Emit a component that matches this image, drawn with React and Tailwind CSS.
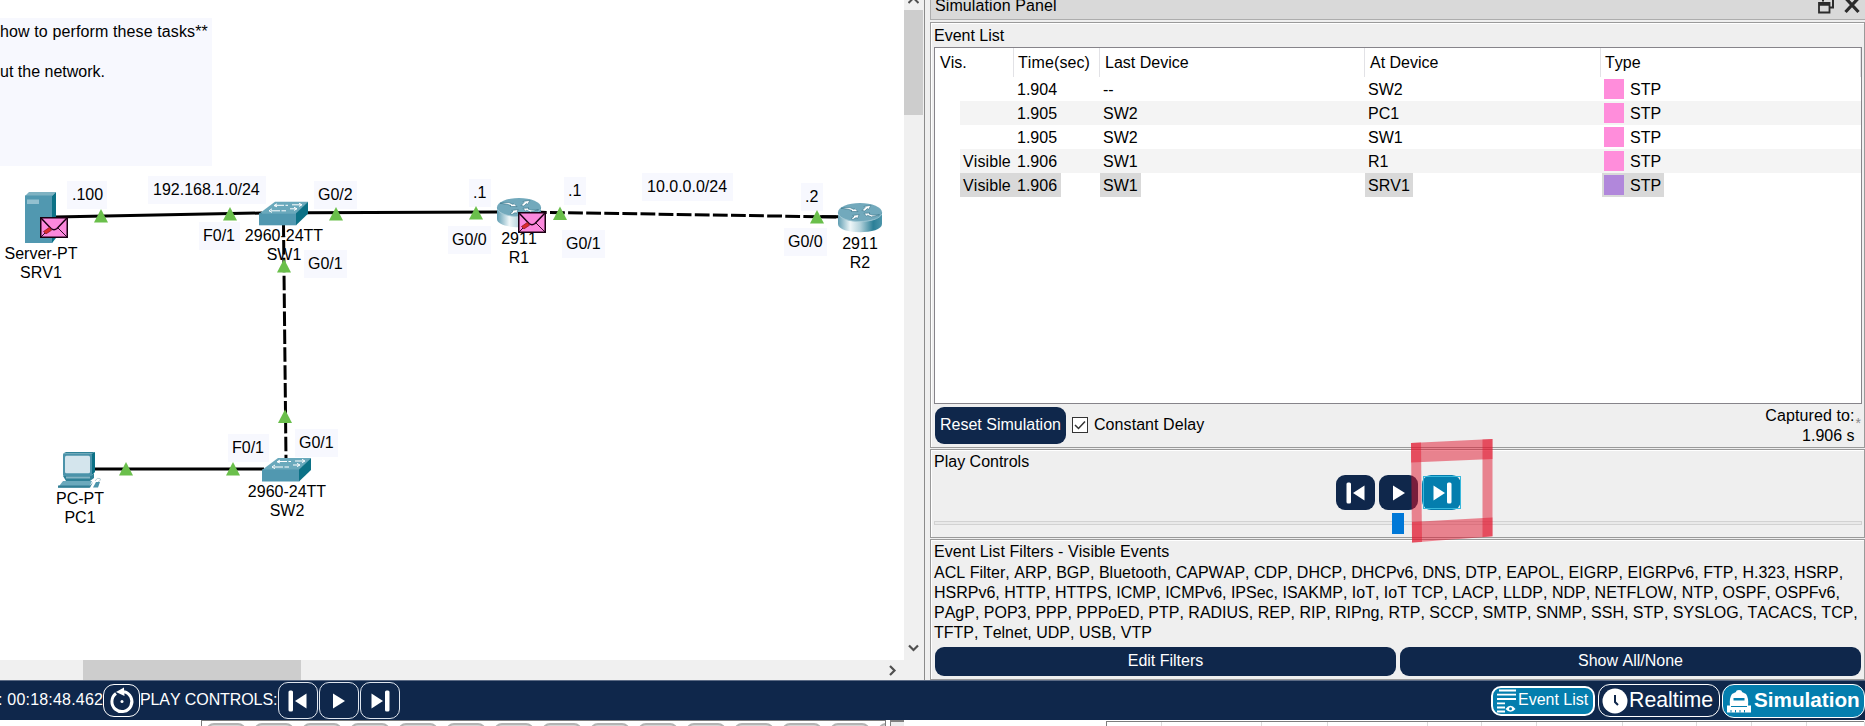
import React from "react";

const portLabels = [
  { t: ".100", x: 67, y: 181, w: 40, h: 28, tx: 5 },
  { t: "192.168.1.0/24", x: 148, y: 176, w: 118, h: 28, tx: 5 },
  { t: "G0/2", x: 314, y: 181, w: 43, h: 28, tx: 4 },
  { t: "F0/1", x: 199, y: 222, w: 41, h: 28, tx: 4 },
  { t: "G0/1", x: 304, y: 250, w: 43, h: 28, tx: 4 },
  { t: ".1", x: 469, y: 179, w: 22, h: 28, tx: 4 },
  { t: ".1", x: 564, y: 177, w: 22, h: 28, tx: 4 },
  { t: "10.0.0.0/24", x: 642, y: 173, w: 91, h: 28, tx: 5 },
  { t: ".2", x: 801, y: 183, w: 22, h: 28, tx: 4 },
  { t: "G0/0", x: 448, y: 226, w: 43, h: 28, tx: 4 },
  { t: "G0/1", x: 562, y: 230, w: 43, h: 28, tx: 4 },
  { t: "G0/0", x: 784, y: 228, w: 43, h: 28, tx: 4 },
  { t: "F0/1", x: 228, y: 434, w: 41, h: 28, tx: 4 },
  { t: "G0/1", x: 295, y: 429, w: 43, h: 28, tx: 4 },
];

const deviceNames = [
  { a: "Server-PT", b: "SRV1", x: 41, y: 244 },
  { a: "2960-24TT", b: "SW1", x: 284, y: 226 },
  { a: "2911", b: "R1", x: 519, y: 229 },
  { a: "2911", b: "R2", x: 860, y: 234 },
  { a: "PC-PT", b: "PC1", x: 80, y: 489 },
  { a: "2960-24TT", b: "SW2", x: 287, y: 482 },
];

const linkLights = [
  [101, 209], [230, 207], [336, 207], [284, 259], [476, 206], [560, 206.5],
  [817, 210], [126, 462], [233, 462], [285, 409.5],
];

function Switch({ x, y }) {
  return (
    <g transform={`translate(${x} ${y})`}>
      <polygon points="0,12 16,0 49,0 37,12" fill="#6aa9bc" />
      <rect x="0" y="11.5" width="37.3" height="12" fill="#5198b0" />
      <polygon points="37,11.5 49,0 49,12 37,23.5" fill="#0c7186" />
      <g stroke="#fff" strokeWidth="1" fill="none">
        <path d="M16 3.5H29M33 3H42M12 9H27M31 7H37" strokeDasharray="9 1.5" />
        <path d="M18 2l-3 1.8 3 1.2M40 1.4l3 1.6-3 1.6M13 7l-3 2 3 1.6M35 5.4l3 1.6-3 1.6" />
      </g>
    </g>
  );
}

function Router({ x, y }) {
  return (
    <g transform={`translate(${x} ${y})`}>
      <path d="M0 9V21C0 32 44 32 44 21V9Z" fill="url(#routerSide)" />
      <ellipse cx="22" cy="9.3" rx="22" ry="9.3" fill="#72a9bc" />
      <path d="M0.3 11C4 21 40 21 43.7 11" fill="none" stroke="#a9cdd8" strokeWidth="0.8" />
      <g fill="#fff" stroke="#2f6f84" strokeWidth="0.6">
        <path d="M3 5.2l9-.6 4 1.8 1-.8 3 3-7-.2 1-.9-3-1z" />
        <path d="M24 7.5l3-3-1-1 7-1.3-2.4 4.2-1.2-.8-2.6 2.4z" />
        <path d="M26 10.3l6-.3-1 .9 3.5 1.2 7-.4-8 2.2-4-1.6-1 .9z" />
        <path d="M13 15.5l3-2-1.3-1 6.4-1-1.6 4-1.4-.9-3 1.8z" />
      </g>
    </g>
  );
}

function Envelope({ x, y }) {
  return (
    <g transform={`translate(${x} ${y})`}>
      <rect x="0.75" y="0.75" width="26.5" height="19.5" fill="#fb88dc" stroke="#1a0012" strokeWidth="1.5" />
      <path d="M1 1L11 11.5Q14 14 17 11.5L27 1" fill="none" stroke="#1a0012" strokeWidth="1.5" />
      <path d="M1 20L10 11M18 11L27 20" fill="none" stroke="#1a0012" strokeWidth="0.9" />
      <path d="M3.5 14.5l6-4.2 2 3-5.5 3.6z" fill="#dc2b2b" stroke="#7d1420" strokeWidth="0.7" />
    </g>
  );
}

function Topology() {
  return (
    <svg className="absolute left-0 top-0" width="904" height="660" viewBox="0 0 904 660">
      <defs>
        <linearGradient id="routerSide">
          <stop offset="0" stopColor="#5f9db2" />
          <stop offset="0.28" stopColor="#eef6f8" />
          <stop offset="0.5" stopColor="#b5d3dc" />
          <stop offset="0.8" stopColor="#2b7f97" />
          <stop offset="1" stopColor="#4c95aa" />
        </linearGradient>
      </defs>
      <g stroke="#000" strokeWidth="3" fill="none">
        <path d="M55 217L262 213M306 212.8L498 212M94 469H264" />
        <path d="M541 212.3L838 217" strokeDasharray="14.8 3.3" strokeDashoffset="-9" />
        <path d="M820 216.7H838" />
        <path d="M283.5 225L286 459" strokeDasharray="14.5 3.4" strokeDashoffset="3" />
      </g>
      <g fill="#6abf4b">
        {linkLights.map(([x, y], i) => (
          <polygon key={i} points={`${x - 7},${y + 13.5} ${x},${y} ${x + 7},${y + 13.5}`} />
        ))}
      </g>
      <g>
        <polygon points="25,196 29,192 56,192 52,196" fill="#7fb2c2" />
        <rect x="25" y="195.5" width="27.3" height="47.5" fill="#5198b0" />
        <polygon points="52,196 56,192 56,238 52,243" fill="#0c7186" />
        <rect x="27" y="199.5" width="12" height="4.5" fill="#93c0cf" />
      </g>
      <Envelope x={40} y={217} />
      <Switch x={259} y={201.8} />
      <Switch x={262} y={458} />
      <Router x={497} y={198} />
      <Envelope x={518} y={212} />
      <Router x={838} y={203} />
      <g>
        <polygon points="63,453.5 66,452 95,452 92,453.5" fill="#2f8197" />
        <polygon points="91,454 95,452 95,472 91,476" fill="#0c7186" />
        <rect x="63" y="453.5" width="29" height="22.5" rx="1" fill="#4b93aa" />
        <rect x="65" y="455.8" width="25" height="17.4" rx="1.5" fill="#d4e5ed" />
        <polygon points="63,476 91,476 94,473 94,478 90,481 66,481" fill="#2f8197" />
        <rect x="66" y="476.5" width="24" height="2" fill="#83b4c4" />
        <polygon points="63,481 92,481 89,487.5 58,487.5" fill="#6aa9bc" />
        <polygon points="58,485.5 90,485.5 93,482 90,487.8 58,487.8" fill="#327f95" />
        <path d="M95 481Q97 477 100 478.500Q102 480 98 482" fill="none" stroke="#b9cdd4" strokeWidth="1" />
        <polygon points="96,482 100,482 98,487.5 93,487.5" fill="#4b93aa" />
      </g>
    </svg>
  );
}

function Workspace() {
  return (
    <div className="flex h-[680px] w-[924px] flex-col bg-[#f0f0f0]">
      <div className="flex h-[660px]">
        <div className="relative h-[660px] w-[904px] overflow-hidden bg-white">
          <div className="absolute left-0 top-[18px] h-[148px] w-[212px] bg-[#f7f8fe] pt-[4px]">
            <p className="tracking-[0.12px]">how to perform these tasks**</p>
            <p className="mt-5">ut the network.</p>
          </div>
          {portLabels.map((l, i) => (
            <div
              key={i}
              className="absolute bg-[#f7f8fe] pt-1"
              style={{ left: l.x, top: l.y, width: l.w, height: l.h, paddingLeft: l.tx }}
            >
              {l.t}
            </div>
          ))}
          {deviceNames.map((d, i) => (
            <div
              key={i}
              className="absolute w-[100px] text-center leading-[19px]"
              style={{ left: d.x - 50, top: d.y }}
            >
              <div>{d.a}</div>
              <div>{d.b}</div>
            </div>
          ))}
          <Topology />
        </div>
        <div className="flex h-[660px] w-5 flex-col items-center justify-between">
          <div className="w-full">
            <svg className="ml-[4px] block" width="11" height="10" viewBox="0 0 11 10">
              <path d="M0.500 3L5.500 -2L10.500 3" fill="none" stroke="#505050" strokeWidth="2" />
            </svg>
            <div className="h-[105px] w-[19px] bg-[#cdcdcd]" />
          </div>
          <svg className="mb-[8px] mr-[2px]" width="11" height="8" viewBox="0 0 11 8">
            <path d="M1 1.500L5.500 6L10 1.500" fill="none" stroke="#505050" strokeWidth="2.200" />
          </svg>
        </div>
      </div>
      <div className="flex h-5 items-center">
        <div className="ml-[83px] h-5 w-[218px] bg-[#cdcdcd]" />
        <svg className="ml-[588px]" width="8" height="11" viewBox="0 0 8 11">
          <path d="M1 1L5.500 5.500L1 10" fill="none" stroke="#505050" strokeWidth="2.200" />
        </svg>
      </div>
    </div>
  );
}

const events = [
  { vis: "", time: "1.904", last: "--", at: "SW2" },
  { vis: "", time: "1.905", last: "SW2", at: "PC1" },
  { vis: "", time: "1.905", last: "SW2", at: "SW1" },
  { vis: "Visible", time: "1.906", last: "SW1", at: "R1" },
  { vis: "Visible", time: "1.906", last: "SW1", at: "SRV1", selected: true },
];

function EventRow({ e, striped }) {
  const mark = e.selected ? "bg-[#d9d9d9]" : "";
  return (
    <div className={`ml-[25px] flex h-6 leading-[26px] ${striped ? "bg-[#f4f4f4]" : ""}`}>
      <div className={`h-6 w-[54px] pl-[3px] tracking-[0.1px] ${mark}`}>{e.vis}</div>
      <div className="w-[86px]">
        <span className={`inline-block h-6 pl-[3px] pr-1 ${mark}`}>{e.time}</span>
      </div>
      <div className="w-[265px]">
        <span className={`inline-block h-6 px-[3px] ${mark}`}>{e.last}</span>
      </div>
      <div className="w-[237px]">
        <span className={`inline-block h-6 px-[3px] ${mark}`}>{e.at}</span>
      </div>
      <div>
        <span className={`flex h-6 items-center gap-[6px] pl-[2px] pr-[3px] ${mark}`}>
          <span className={`h-5 w-5 ${e.selected ? "bg-[#b187db]" : "bg-[#ff8ddb]"}`} />
          <span className="h-6">STP</span>
        </span>
      </div>
    </div>
  );
}

function EventTable() {
  return (
    <div className="h-[357px] w-[928px] border border-[#86848a] bg-white">
      <div className="flex h-[29px] leading-[29px]">
        <div className="w-[79px] border-r border-[#e2e2e6] pl-[5px]">Vis.</div>
        <div className="w-[86px] border-r border-[#e2e2e6] pl-[4px] tracking-[0.1px]">Time(sec)</div>
        <div className="w-[265px] border-r border-[#e2e2e6] pl-[5px]">Last Device</div>
        <div className="w-[236px] border-r border-[#e2e2e6] pl-[5px]">At Device</div>
        <div className="grow border-r border-[#e2e2e6] pl-[4px]">Type</div>
      </div>
      {events.map((e, i) => (
        <EventRow key={i} e={e} striped={i === 1 || i === 3} />
      ))}
    </div>
  );
}

function StepBack() {
  return (
    <svg width="20" height="24" viewBox="0 0 20 24" fill="#fff">
      <rect x="0.500" y="1.500" width="4.500" height="21" rx="1.500" />
      <polygon points="7,12 18.500,4.500 18.500,19.500" />
    </svg>
  );
}
function StepForward() {
  return (
    <svg width="20" height="24" viewBox="0 0 20 24" fill="#fff">
      <rect x="15" y="1.500" width="4.500" height="21" rx="1.500" />
      <polygon points="13,12 1.500,4.500 1.500,19.500" />
    </svg>
  );
}
function PlayIcon() {
  return (
    <svg width="14" height="24" viewBox="0 0 14 24" fill="#fff">
      <polygon points="13,12 1,4.500 1,19.500" />
    </svg>
  );
}

function Highlight() {
  return (
    <svg className="pointer-events-none absolute left-[479px] top-[-11px]" width="86" height="106" viewBox="0 0 86 106">
      <g fill="#e1152d" fillOpacity="0.5">
        <polygon points="1,4 82.500,0 82.500,20 1,23.500" />
        <polygon points="1,4 11,3.500 12,103 2,103.500" />
        <polygon points="72.500,0.500 82.500,0 82.500,97 72.500,98" />
        <polygon points="2,83 82.500,78.500 82.500,97.500 2,103.500" />
      </g>
    </svg>
  );
}

function Panel({ className, children }) {
  return (
    <section className={`border border-[#9a9a9a] pl-[3px] shadow-[inset_1px_1px_0_#fff] ${className}`}>
      {children}
    </section>
  );
}

function SimulationPanel() {
  return (
    <div className="flex h-[680px] w-[941px] flex-col border-l border-[#8b8b8b] bg-[#efefef] pl-[5px]">
      <div className="flex h-5 items-start justify-between border-b border-l border-[#adadad] bg-[#d9d9d9] pl-1 pr-[5px]">
        <span className="mt-[-4px] tracking-[0.1px]">Simulation Panel</span>
        <span className="flex gap-[9px]">
          <svg width="17" height="14" viewBox="0 0 17 14" fill="none" stroke="#2b2b2b">
            <path d="M5 0V1.500M15 0V7.500H12" strokeWidth="2" />
            <path d="M1 12.500V3H11.500V12.500Z" strokeWidth="1.800" />
            <path d="M1 4H12" strokeWidth="3.500" />
          </svg>
          <svg width="16" height="14" viewBox="0 0 16 14">
            <path d="M1.500 -2L14.500 12M14.500 -2L1.500 12" stroke="#2b2b2b" strokeWidth="3.200" />
          </svg>
        </span>
      </div>
      <Panel className="mt-[2px] h-[426px]">
        <div className="h-6 pt-[3px]">Event List</div>
        <EventTable />
        <div className="flex h-[43px] items-start pt-[3px]">
          <button className="ml-[1px] h-[37px] w-[131px] rounded-[9px] bg-[#0f274b] pb-[1px] text-white">Reset Simulation</button>
          <span className="ml-[6px] mt-[10px] flex h-4 w-4 items-center justify-center border border-[#333] bg-white">
            <svg width="12" height="10" viewBox="0 0 12 10">
              <path d="M1 5L4.500 8.500L11 1.500" fill="none" stroke="#333" strokeWidth="1.500" />
            </svg>
          </span>
          <span className="ml-[6px] mt-[8px] tracking-[0.07px]">Constant Delay</span>
          <div className="ml-auto text-right">
            <div className="mt-[-1px] tracking-[0.1px]">Captured to:</div>
            <div>1.906 s</div>
          </div>
          <span className="ml-[1px] mr-[3px] mt-[8px] text-[14px] leading-[16px] text-[#8a8a8a]">*</span>
        </div>
      </Panel>
      <Panel className="relative mt-[1px] h-[89px]">
        <div className="h-[25px] pt-[2px]">Play Controls</div>
        <div className="ml-[402px] flex h-[36px] gap-[4px]">
          <button className="flex h-[35px] w-[39px] items-center justify-center rounded-[9px] bg-[#0f274b]"><StepBack /></button>
          <button className="flex h-[35px] w-[39px] items-center justify-center rounded-[9px] bg-[#0f274b]"><PlayIcon /></button>
          <button className="flex h-[35px] w-[39px] items-center justify-center rounded-[9px] bg-[#047eae]">
            <span className="flex h-[33px] w-[38px] items-center justify-center border border-[#38b8dc]"><StepForward /></span>
          </button>
        </div>
        <div className="flex h-[24px] items-center">
          <div className="h-1 w-[458px] border border-r-0 border-[#d2d2d2] bg-[#e9e9e9]" />
          <div className="h-[21px] w-3 bg-[#0078d7]" />
          <div className="h-1 w-[458px] border border-l-0 border-[#d2d2d2] bg-[#e9e9e9]" />
        </div>
        <Highlight />
      </Panel>
      <Panel className="mt-[1px] h-[141px]">
        <div className="h-[23px] pt-[2px] tracking-[0.07px]">Event List Filters - Visible Events</div>
        <div className="whitespace-nowrap leading-5">
          <p className="tracking-[0.02px]">ACL Filter, ARP, BGP, Bluetooth, CAPWAP, CDP, DHCP, DHCPv6, DNS, DTP, EAPOL, EIGRP, EIGRPv6, FTP, H.323, HSRP,</p>
          <p>HSRPv6, HTTP, HTTPS, ICMP, ICMPv6, IPSec, ISAKMP, IoT, IoT TCP, LACP, LLDP, NDP, NETFLOW, NTP, OSPF, OSPFv6,</p>
          <p>PAgP, POP3, PPP, PPPoED, PTP, RADIUS, REP, RIP, RIPng, RTP, SCCP, SMTP, SNMP, SSH, STP, SYSLOG, TACACS, TCP,</p>
          <p>TFTP, Telnet, UDP, USB, VTP</p>
        </div>
        <div className="mt-[4px] flex gap-[4px] pl-[1px]">
          <button className="h-[29px] w-[461px] rounded-[9px] bg-[#0f274b] pb-[1px] text-white">Edit Filters</button>
          <button className="h-[29px] w-[461px] rounded-[9px] bg-[#0f274b] pb-[1px] text-white">Show All/None</button>
        </div>
      </Panel>
    </div>
  );
}

function Toolbar() {
  return (
    <div className="flex h-10 items-center border-t border-[#5c6b85] bg-[#0f274b] text-white">
      <span className="ml-[-2px] w-[105px] whitespace-pre pb-[2px] tracking-[0.2px]">: 00:18:48.462</span>
      <button className="flex h-[33px] w-[37px] items-center justify-center rounded-[11px] border border-white">
        <svg width="26" height="28" viewBox="0 0 26 28">
          <path d="M7 6.500A10 10 0 1 0 15 4.800" fill="none" stroke="#fff" strokeWidth="3" />
          <polygon points="7,5 15,0.500 15.500,9" fill="#fff" />
          <circle cx="13" cy="14.500" r="1.500" fill="#fff" />
        </svg>
      </button>
      <span className="w-[138px] whitespace-nowrap pb-[2px] tracking-[-0.1px]">PLAY CONTROLS:</span>
      <div className="flex gap-[1px]">
        <button className="flex h-[37px] w-[40px] items-center justify-center rounded-[10px] border border-[#dfe5ee]"><StepBack /></button>
        <button className="flex h-[37px] w-[40px] items-center justify-center rounded-[10px] border border-[#dfe5ee]"><PlayIcon /></button>
        <button className="flex h-[37px] w-[40px] items-center justify-center rounded-[10px] border border-[#dfe5ee]"><StepForward /></button>
      </div>
      <div className="ml-auto flex items-center whitespace-nowrap">
        <button className="flex h-[30px] w-[104px] items-center rounded-[10px] border-2 border-white bg-[#047eae] pl-[3px]">
          <svg width="20" height="24" viewBox="0 0 20 24">
            <path d="M3 1.500H20M1 5.700H20M1 10H20M1 14.300H9M1 18.500H9M1 22.500H9" stroke="#fff" strokeWidth="1.800" />
            <path d="M9.500 20Q14.500 13.500 19.500 20Q14.500 25.500 9.500 20Z" fill="#fff" />
            <circle cx="14.500" cy="19.800" r="1.500" fill="#047eae" />
          </svg>
          <span className="ml-[2px] pb-[1px]">Event List</span>
        </button>
        <button className="ml-[3px] flex h-[33px] w-[122px] items-center rounded-[12px] border border-white pl-[3px]">
          <svg width="26" height="26" viewBox="0 0 26 26">
            <circle cx="13" cy="13" r="12.500" fill="#fff" />
            <path d="M13 7V14L16 17" fill="none" stroke="#0f274b" strokeWidth="2" />
          </svg>
          <span className="ml-[1px] pb-[2px] text-[21.300px] leading-6">Realtime</span>
        </button>
        <button className="ml-[2px] flex h-[34px] w-[143px] items-center rounded-[12px] border border-white bg-[#047eae] pl-[3px]">
          <svg width="26" height="24" viewBox="0 0 26 24">
            <path d="M10 3Q10 1 13 1Q16 1 16 3L20 5Q23 9 22 17H4Q3 9 6 5Z" fill="#fff" />
            <path d="M7.500 9H18.500V11.500H7.500Z" fill="#047eae" />
            <path d="M1 16.500H5V18H21V16.500H25V23.500H1Z" fill="#fff" />
            <path d="M5 23.500V21M9.500 23.500V21M14 23.500V21M18.500 23.500V21" stroke="#047eae" strokeWidth="1" />
          </svg>
          <span className="ml-[2px] pb-[2px] text-[20.700px] font-bold leading-6">Simulation</span>
        </button>
      </div>
    </div>
  );
}

const columnWidths = [55, 100, 66, 100, 54, 55, 86, 74, 55, 55, 58];

function BottomStrip() {
  return (
    <div className="flex h-[6px] bg-white">
      <div className="ml-[201px] flex w-[685px] gap-2 overflow-hidden border-x border-t border-[#7d7d7d] pl-1 pt-[2px]">
        {Array.from({ length: 15 }, (_, i) => (
          <div key={i} className="h-5 w-10 shrink-0 rounded-t-[8px] border-2 border-[#b4b4b4] bg-[#d6d6d6]" />
        ))}
      </div>
      <div className="ml-1 w-[14px] border-l border-t-2 border-[#808080] bg-[#ededed]" />
      <div className="ml-[202px] mt-[1px] flex w-[758px] border-l border-t border-[#7d7d7d]">
        {columnWidths.map((w, i) => (
          <div key={i} className="shrink-0 border-r border-[#dcdcdc]" style={{ width: w }} />
        ))}
      </div>
    </div>
  );
}

export default function App() {
  return (
    <div className="flex h-[726px] w-[1865px] flex-col overflow-hidden bg-white font-['Liberation_Sans',Arial,sans-serif] text-[16px] leading-5 text-black [font-kerning:none]">
      <div className="flex h-[680px]">
        <Workspace />
        <SimulationPanel />
      </div>
      <Toolbar />
      <BottomStrip />
    </div>
  );
}
